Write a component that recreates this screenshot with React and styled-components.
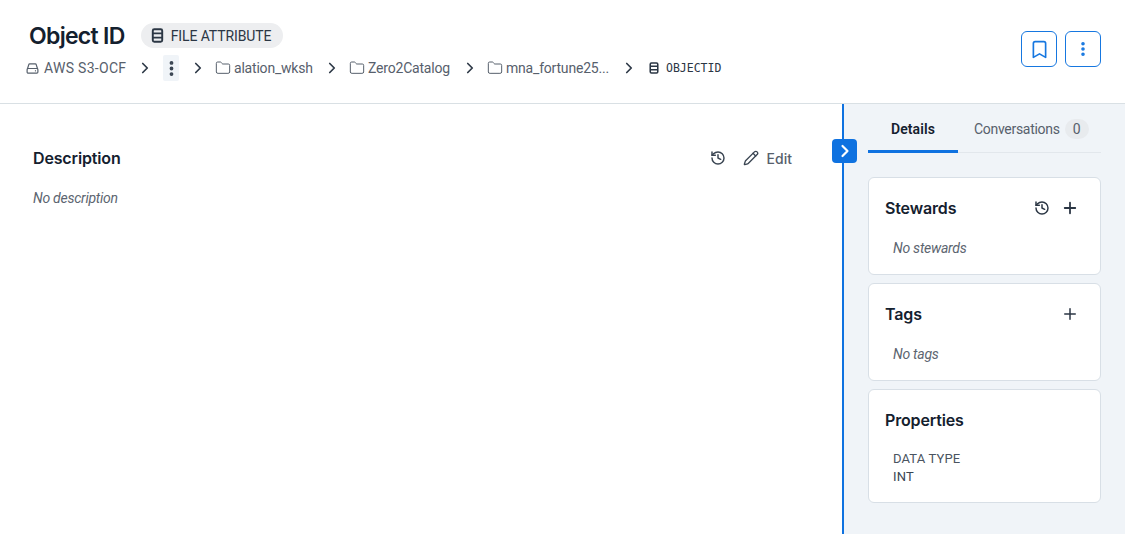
import React from 'react';
import styled, { createGlobalStyle } from 'styled-components';
import { ChevronRight, EllipsisVertical, Bookmark, Folder, History, Pencil, Plus } from 'lucide-react';

const GlobalStyle = createGlobalStyle`
    html, body {
        margin: 0;
        padding: 0;
        background: #fff;
    }
    body {
        font-family: Inter, "Noto Sans", sans-serif;
        color: #14202e;
    }
    * {
        box-sizing: border-box;
    }
    svg {
        flex: none;
    }
`;

const Page = styled.div`
    width: 1125px;
    height: 534px;
    overflow: hidden;
    display: flex;
    flex-direction: column;
`;

const Header = styled.header`
    height: 104px;
    flex: none;
    border-bottom: 1px solid #d9e0e4;
    display: flex;
    justify-content: space-between;
    padding: 23px 24px 0 26px;
`;

const HeaderLeft = styled.div`
    display: flex;
    flex-direction: column;
    gap: 7px;
`;

const TitleRow = styled.div`
    display: flex;
    align-items: center;
    gap: 16px;
    padding-left: 3px;
    height: 25px;
`;

const Title = styled.h1`
    margin: 0;
    font-size: 23px;
    font-weight: 600;
    letter-spacing: -0.7px;
    color: #14202e;
`;

const TypeChip = styled.div`
    height: 25px;
    width: 142px;
    border-radius: 13px;
    background: #edeef0;
    padding-left: 9px;
    display: flex;
    align-items: center;
    gap: 6px;
    font-family: Roboto, sans-serif;
    font-size: 14px;
    letter-spacing: -0.1px;
    color: #2b3644;
`;

const Crumbs = styled.nav`
    display: flex;
    align-items: center;
    height: 26px;
    font-family: Roboto, sans-serif;
    font-size: 14px;
    letter-spacing: -0.2px;
    color: #57606c;
`;

const Crumb = styled.span`
    display: flex;
    align-items: center;
    gap: ${(p) => p.$gap || 3}px;
    white-space: nowrap;
    width: ${(p) => p.$width}px;
    letter-spacing: ${(p) => (p.$gap ? '0.3px' : 'inherit')};
    svg {
        margin-left: ${(p) => (p.$gap ? 0 : -1)}px;
    }
`;

const Sep = styled.span`
    display: flex;
    justify-content: center;
    width: ${(p) => p.$width}px;
    color: #2f3a48;
`;

const MoreCrumb = styled.span`
    width: 16px;
    height: 26px;
    border-radius: 2px;
    background: #f0f4f8;
    color: #3a4552;
    display: flex;
    align-items: center;
    justify-content: center;
`;

const MonoCrumb = styled.span`
    display: flex;
    align-items: center;
    gap: 6px;
    font-family: "DejaVu Sans Mono", "Liberation Mono", monospace;
    font-size: 11.5px;
    letter-spacing: 0;
    color: #2b3644;
`;

const HeaderActions = styled.div`
    display: flex;
    gap: 8px;
    padding-top: 8px;
`;

const OutlineButton = styled.button`
    width: 36px;
    height: 36px;
    padding: 0;
    border: 1px solid #1677e0;
    border-radius: 6px;
    background: #fff;
    color: #1677e0;
    display: flex;
    align-items: center;
    justify-content: center;
`;

const Body = styled.div`
    flex: 1;
    display: flex;
    min-height: 0;
`;

const Main = styled.main`
    width: 842px;
    flex: none;
    padding: 42px 33px 0;
`;

const DescriptionHead = styled.div`
    display: flex;
    align-items: center;
    justify-content: space-between;
    height: 24px;
    padding-right: 17px;
`;

const SectionTitle = styled.h2`
    margin: 0;
    font-size: 16px;
    font-weight: 600;
    letter-spacing: -0.15px;
    color: #14202e;
`;

const DescActions = styled.div`
    display: flex;
    align-items: center;
    gap: 17px;
    color: #3a4552;
`;

const EditLink = styled.span`
    display: flex;
    align-items: center;
    gap: 8px;
    font-size: 14px;
    font-weight: 500;
    color: #57606c;
`;

const Empty = styled.p`
    margin: ${(p) => p.$top || 0}px 0 0 ${(p) => p.$left || 0}px;
    font-family: Roboto, sans-serif;
    font-size: 14px;
    line-height: 20px;
    font-style: italic;
    letter-spacing: -0.25px;
    color: #5c6570;
`;

const Side = styled.aside`
    position: relative;
    flex: 1;
    border-left: 2px solid #0f72e0;
    background: #f0f4f8;
    padding: 0 24px 0 24px;
`;

const ToggleButton = styled.button`
    position: absolute;
    left: -12px;
    top: 35px;
    width: 25px;
    height: 24px;
    padding: 0;
    border: none;
    border-radius: 4px;
    background: #0f72e0;
    color: #fff;
    display: flex;
    align-items: center;
    justify-content: center;
`;

const Tabs = styled.div`
    display: flex;
    height: 49px;
    border-bottom: 1px solid #e2e7ec;
    margin-bottom: 24px;
`;

const Tab = styled.div`
    height: 49px;
    display: flex;
    align-items: center;
    justify-content: ${(p) => (p.$active ? 'center' : 'flex-start')};
    gap: 5px;
    font-family: Roboto, sans-serif;
    font-size: 14px;
    letter-spacing: ${(p) => (p.$active ? '0.1px' : '-0.3px')};
    width: ${(p) => p.$width}px;
    font-weight: ${(p) => (p.$active ? 600 : 400)};
    color: ${(p) => (p.$active ? '#14202e' : '#57606c')};
    border-bottom: ${(p) => (p.$active ? '3px solid #0f72e0' : 'none')};
    padding: ${(p) => (p.$active ? '3px 0 0' : '0 0 0 16px')};
`;

const Count = styled.span`
    width: 24px;
    height: 20px;
    border-radius: 10px;
    background: #e8ebee;
    display: flex;
    align-items: center;
    justify-content: center;
    color: #57606c;
`;

const Cards = styled.div`
    display: flex;
    flex-direction: column;
    gap: 8px;
`;

const Card = styled.section`
    height: ${(p) => p.$height}px;
    background: #fff;
    border: 1px solid #d8dfe6;
    border-radius: 6px;
    padding: 17px 16px 0;
`;

const CardHead = styled.div`
    display: flex;
    align-items: center;
    justify-content: space-between;
    height: 26px;
    padding-right: 5px;
`;

const CardIcons = styled.div`
    display: flex;
    align-items: center;
    gap: 11px;
    color: #2b3644;
`;

const Property = styled.div`
    margin: 17px 0 0 8px;
    font-family: Roboto, sans-serif;
    font-size: 13px;
    line-height: 18px;
    letter-spacing: 0.15px;
    color: #4a5460;
`;

const PropertyValue = styled.div`
    color: #3a4552;
`;

// icone de atributo: uma coluna com linhas
function AttributeIcon({ size = 14 }) {
    return (
        <svg width={size} height={size} viewBox="0 0 14 14" fill="none" stroke="currentColor" strokeWidth="1.8">
            <rect x="2.6" y="1.2" width="8.8" height="11.6" rx="1.4" />
            <path d="M2.6 5h8.8M2.6 9h8.8" />
        </svg>
    );
}

function StorageIcon() {
    return (
        <svg width="13" height="13" viewBox="0 0 14 14" fill="none" stroke="currentColor" strokeWidth="1.3">
            <path d="M1.5 7.5 3 2.8c.1-.5.5-.8 1-.8h6c.5 0 .9.3 1 .8l1.5 4.7" />
            <rect x="1.2" y="7" width="11.6" height="5" rx="1.2" />
            <path d="M9.6 9.5h1.2" />
        </svg>
    );
}

function CrumbSep({ width }) {
    return (
        <Sep $width={width}>
            <ChevronRight size={18} strokeWidth={2.3} />
        </Sep>
    );
}

export default function App() {
    return (
        <>
            <GlobalStyle />
            <Page>
                <Header>
                    <HeaderLeft>
                        <TitleRow>
                            <Title>Object ID</Title>
                            <TypeChip>
                                <AttributeIcon size={15} />
                                FILE ATTRIBUTE
                            </TypeChip>
                        </TitleRow>
                        <Crumbs>
                            <Crumb $width={101} $gap={5}>
                                <StorageIcon />
                                AWS S3-OCF
                            </Crumb>
                            <CrumbSep width={36} />
                            <MoreCrumb>
                                <EllipsisVertical size={19} strokeWidth={2.8} fill="currentColor" />
                            </MoreCrumb>
                            <CrumbSep width={37} />
                            <Crumb $width={98}>
                                <Folder size={16} strokeWidth={1.5} />
                                alation_wksh
                            </Crumb>
                            <CrumbSep width={36} />
                            <Crumb $width={101}>
                                <Folder size={16} strokeWidth={1.5} />
                                Zero2Catalog
                            </Crumb>
                            <CrumbSep width={37} />
                            <Crumb $width={122}>
                                <Folder size={16} strokeWidth={1.5} />
                                mna_fortune25...
                            </Crumb>
                            <CrumbSep width={38} />
                            <MonoCrumb>
                                <AttributeIcon size={12} />
                                OBJECTID
                            </MonoCrumb>
                        </Crumbs>
                    </HeaderLeft>
                    <HeaderActions>
                        <OutlineButton>
                            <Bookmark size={21} strokeWidth={1.9} />
                        </OutlineButton>
                        <OutlineButton>
                            <EllipsisVertical size={18} strokeWidth={2.8} fill="currentColor" />
                        </OutlineButton>
                    </HeaderActions>
                </Header>
                <Body>
                    <Main>
                        <DescriptionHead>
                            <SectionTitle>Description</SectionTitle>
                            <DescActions>
                                <History size={16} strokeWidth={2.2} />
                                <EditLink>
                                    <Pencil size={16} strokeWidth={2} color="#3a4552" />
                                    Edit
                                </EditLink>
                            </DescActions>
                        </DescriptionHead>
                        <Empty $top={18}>No description</Empty>
                    </Main>
                    <Side>
                        <ToggleButton>
                            <ChevronRight size={20} strokeWidth={2.6} />
                        </ToggleButton>
                        <Tabs>
                            <Tab $active $width={90}>Details</Tab>
                            <Tab $width={143}>
                                Conversations <Count>0</Count>
                            </Tab>
                        </Tabs>
                        <Cards>
                            <Card $height={98}>
                                <CardHead>
                                    <SectionTitle>Stewards</SectionTitle>
                                    <CardIcons>
                                        <History size={16} strokeWidth={2.2} />
                                        <Plus size={18} strokeWidth={2.4} />
                                    </CardIcons>
                                </CardHead>
                                <Empty $top={17} $left={8}>No stewards</Empty>
                            </Card>
                            <Card $height={98}>
                                <CardHead>
                                    <SectionTitle>Tags</SectionTitle>
                                    <CardIcons>
                                        <Plus size={18} strokeWidth={2} />
                                    </CardIcons>
                                </CardHead>
                                <Empty $top={17} $left={8}>No tags</Empty>
                            </Card>
                            <Card $height={114}>
                                <CardHead>
                                    <SectionTitle>Properties</SectionTitle>
                                </CardHead>
                                <Property>
                                    DATA TYPE
                                    <PropertyValue>INT</PropertyValue>
                                </Property>
                            </Card>
                        </Cards>
                    </Side>
                </Body>
            </Page>
        </>
    );
}
